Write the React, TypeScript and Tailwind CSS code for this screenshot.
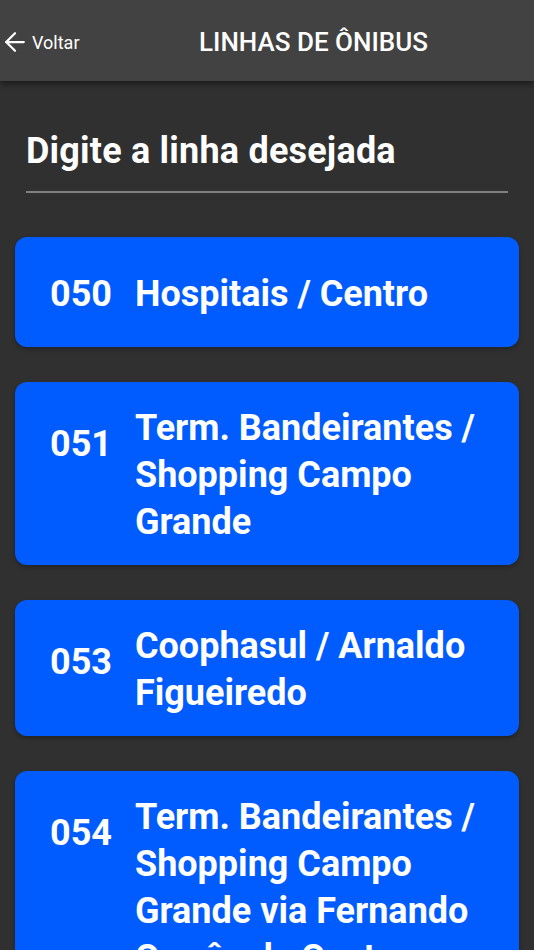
import { ArrowLeft } from "lucide-react"

const linhas = [
  { numero: "050", nome: "Hospitais / Centro", single: true },
  { numero: "051", nome: "Term. Bandeirantes / Shopping Campo Grande" },
  { numero: "053", nome: "Coophasul / Arnaldo Figueiredo" },
  { numero: "054", nome: "Term. Bandeirantes / Shopping Campo Grande via Fernando Corrêa da Costa" },
]

export default function App() {
  return (
    <div className="h-[950px] overflow-hidden bg-[#303030] font-['Roboto',sans-serif] text-white">
      {/* Header */}
      <header className="relative z-10 flex h-[81px] items-center bg-[#424242] pt-[3px] shadow-[0_3px_6px_rgba(0,0,0,0.45)]">
        <button className="flex items-center gap-[2px] text-[18px]">
          <ArrowLeft className="h-[30px] w-[30px]" strokeWidth={1.8} />
          Voltar
        </button>
        <h1 className="absolute left-[199px] text-[26px] font-medium">LINHAS DE ÔNIBUS</h1>
      </header>

      <div className="px-[26px] pt-[48px]">
        <h2 className="text-[36px] font-bold leading-[44px] tracking-[0.2px]">Digite a linha desejada</h2>
        <div className="mt-[18px] h-[2px] bg-[#808080]" />
      </div>

      <div className="flex flex-col gap-[35px] px-[15px] pt-[44px]">
        {linhas.map((l) => (
          <div
            key={l.numero}
            className={`flex gap-[23px] rounded-[12px] bg-[#005cff] pl-[35px] pr-[20px] shadow-[0_2px_4px_rgba(0,0,0,0.3)] ${
              l.single ? "h-[110px] items-center pt-[4px]" : "items-start pt-[23px] pb-[19px]"
            }`}
          >
            <span className={`text-[36px] font-bold leading-[47px] ${l.single ? "" : "mt-[16px]"}`}>{l.numero}</span>
            <span className="text-[36px] font-bold leading-[47px]">{l.nome}</span>
          </div>
        ))}
      </div>
    </div>
  )
}
